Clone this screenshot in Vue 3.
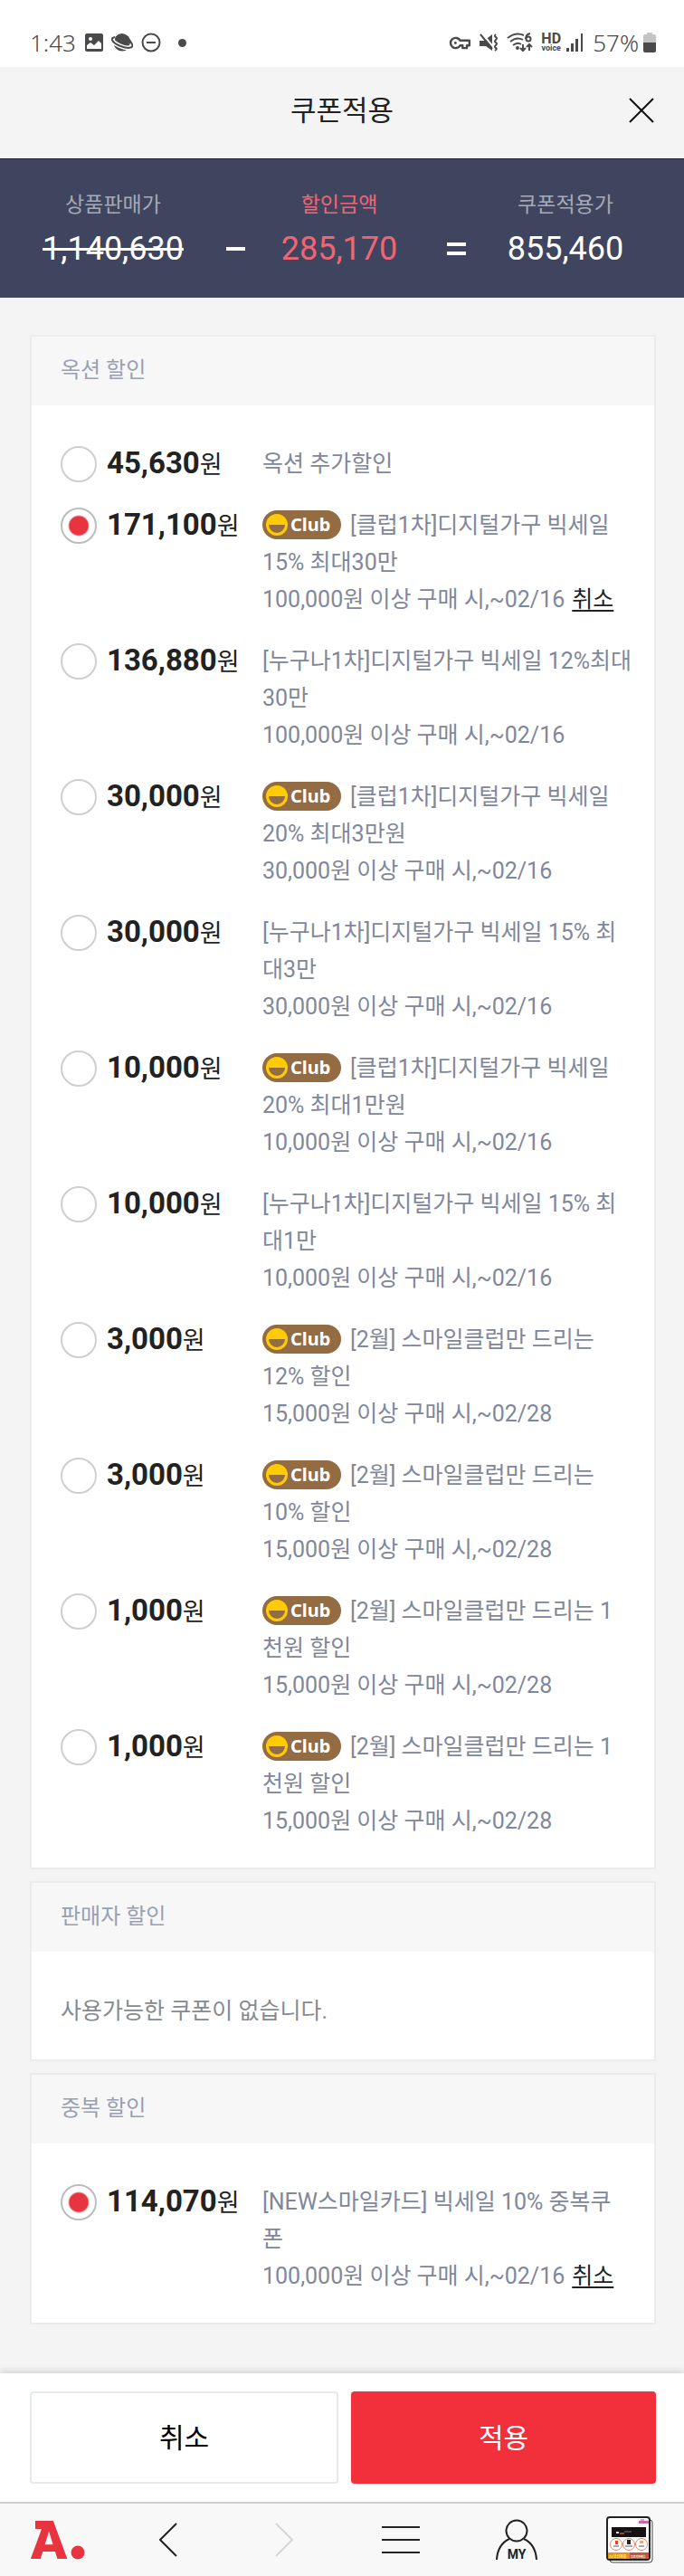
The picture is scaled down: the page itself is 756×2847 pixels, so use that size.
<script setup>
import { ref } from 'vue'

const auction = ref('1')
const overlap = ref('0')

const auctionCoupons = [
  { amount: '45,630', club: false, lines: ['옥션 추가할인'], terms: '' },
  { amount: '171,100', club: true, lines: ['[클럽1차]디지털가구 빅세일', '15% 최대30만'], terms: '100,000원 이상 구매 시,~02/16' },
  { amount: '136,880', club: false, lines: ['[누구나1차]디지털가구 빅세일 12%최대', '30만'], terms: '100,000원 이상 구매 시,~02/16' },
  { amount: '30,000', club: true, lines: ['[클럽1차]디지털가구 빅세일', '20% 최대3만원'], terms: '30,000원 이상 구매 시,~02/16' },
  { amount: '30,000', club: false, lines: ['[누구나1차]디지털가구 빅세일 15% 최', '대3만'], terms: '30,000원 이상 구매 시,~02/16' },
  { amount: '10,000', club: true, lines: ['[클럽1차]디지털가구 빅세일', '20% 최대1만원'], terms: '10,000원 이상 구매 시,~02/16' },
  { amount: '10,000', club: false, lines: ['[누구나1차]디지털가구 빅세일 15% 최', '대1만'], terms: '10,000원 이상 구매 시,~02/16' },
  { amount: '3,000', club: true, lines: ['[2월] 스마일클럽만 드리는', '12% 할인'], terms: '15,000원 이상 구매 시,~02/28' },
  { amount: '3,000', club: true, lines: ['[2월] 스마일클럽만 드리는', '10% 할인'], terms: '15,000원 이상 구매 시,~02/28' },
  { amount: '1,000', club: true, lines: ['[2월] 스마일클럽만 드리는 1', '천원 할인'], terms: '15,000원 이상 구매 시,~02/28' },
  { amount: '1,000', club: true, lines: ['[2월] 스마일클럽만 드리는 1', '천원 할인'], terms: '15,000원 이상 구매 시,~02/28' },
]
const overlapCoupons = [
  { amount: '114,070', lines: ['[NEW스마일카드] 빅세일 10% 중복쿠', '폰'], terms: '100,000원 이상 구매 시,~02/16' },
]
</script>

<template>
  <div class="page">
    <div class="status">
      <div class="status-side">
        <span class="clock">1:43</span>
        <svg class="st-image" width="20" height="20" viewBox="0 0 20 20">
          <rect width="20" height="20" rx="2" fill="#4a4a4a" />
          <circle cx="6" cy="6" r="2" fill="#fff" />
          <path d="M2 17v-4l4-3 4 3 5-5 3 3v6z" fill="#fff" />
        </svg>
        <svg class="st-planet" width="24" height="20" viewBox="0 0 24 20">
          <circle cx="12" cy="10" r="9.500" fill="#4a4a4a" />
          <path d="M4 4C-2 5 1 10 9 13.500S24 17 22.500 11" fill="none" stroke="#fff" stroke-width="5" />
          <path d="M4 4C-2 5 1 10 9 13.500S26 17 22.500 11L20 7" fill="none" stroke="#4a4a4a" stroke-width="2" />
          <path d="M4 6Q6 0 12 0q6 1 8 6 2 4-1 6Q10 12 4 6z" fill="#4a4a4a" />
        </svg>
        <svg class="st-minus" width="22" height="22" viewBox="0 0 22 22" fill="none" stroke="#4a4a4a" stroke-width="2">
          <circle cx="11" cy="11" r="9.500" />
          <path d="M6 11h10" />
        </svg>
        <i class="st-dot"></i>
      </div>
      <div class="status-side">
        <svg width="25" height="15" viewBox="0 0 26 16" fill="none" stroke="#4a4a4a" stroke-width="2.600">
          <path d="M13 5a6 6 0 1 0 0 6h3v3h5v-3h3V5z" stroke-linejoin="round" />
          <circle cx="7.500" cy="8" r="1.500" fill="#4a4a4a" stroke="none" />
        </svg>
        <svg class="st-mute" width="21" height="20" viewBox="0 0 21 20">
          <path d="M0 8h5l9-7v18l-7-5H0z" fill="#4a4a4a" />
          <path d="M3 0l14 17" stroke="#fff" stroke-width="2" />
          <path d="M1 1l13 16" stroke="#4a4a4a" stroke-width="2" />
          <path d="M18 1q-2 2 0 3t0 3 0 3 0 3 0 3-1 3" fill="none" stroke="#4a4a4a" stroke-width="2" />
        </svg>
        <svg class="st-wifi" width="29" height="22" viewBox="0 0 29 22" fill="none" stroke="#4a4a4a" stroke-width="2">
          <path d="M1 6q9-7 18-3M4 10q7-6 14-2M7 14q5-4 9-1" />
          <circle cx="12" cy="17" r="1" fill="#4a4a4a" />
          <path d="M26 1q-5 1-5 6" />
          <circle cx="24" cy="7" r="2.500" />
          <path d="M18 13v7M15 17l3 3 3-3M25 20v-7M22 16l3-3 3 3" />
        </svg>
        <span class="hd"><b>HD</b><small>voice</small></span>
        <svg class="st-signal" width="19" height="20" viewBox="0 0 19 20" fill="#4a4a4a">
          <rect y="16" width="3" height="4" />
          <rect x="5" y="11" width="3" height="9" />
          <rect x="10" y="6" width="3" height="14" />
          <rect x="16" width="2" height="20" />
        </svg>
        <span class="percent">57%</span>
        <svg class="st-battery" width="14" height="22" viewBox="0 0 14 22">
          <path d="M4 0h6v2h2q2 0 2 2v8H0V4q0-2 2-2h2z" fill="#c4c4c4" />
          <path d="M0 11h14v9q0 2-2 2H2q-2 0-2-2z" fill="#4a4a4a" />
        </svg>
      </div>
    </div>

    <header class="top">
      <h1>쿠폰적용</h1>
      <button class="close" type="button" aria-label="닫기">
        <svg width="28" height="28" viewBox="0 0 28 28" stroke="#111" stroke-width="2">
          <path d="M1 1l26 26M27 1L1 27" />
        </svg>
      </button>
    </header>

    <section class="summary">
      <div class="sum-item">
        <span class="sum-label">상품판매가</span>
        <del class="sum-value">1,140,630</del>
      </div>
      <i class="op minus"></i>
      <div class="sum-item discount">
        <span class="sum-label">할인금액</span>
        <span class="sum-value">285,170</span>
      </div>
      <i class="op equals"></i>
      <div class="sum-item">
        <span class="sum-label">쿠폰적용가</span>
        <span class="sum-value">855,460</span>
      </div>
    </section>

    <main class="panels">
      <section class="panel">
        <h2>옥션 할인</h2>
        <ul class="coupons">
          <li v-for="(c, i) in auctionCoupons" :key="i">
            <input :id="'a' + i" v-model="auction" type="radio" name="auction" :value="String(i)" />
            <label class="amount" :for="'a' + i"><b>{{ c.amount }}</b>원</label>
            <div class="desc">
              <p v-for="(line, n) in c.lines" :key="n">
                <span v-if="c.club && n === 0" class="club">
                  <svg width="24" height="24" viewBox="0 0 24 24">
                    <circle cx="12" cy="12" r="10.500" fill="#946c43" stroke="#ffcb05" stroke-width="3" />
                    <path d="M2 12a10 10 0 0 1 20 0z" fill="#ffcb05" />
                  </svg>Club</span>{{ line }}
              </p>
              <p v-if="c.terms">{{ c.terms }}<a v-if="auction === String(i)" href="#">취소</a></p>
            </div>
          </li>
        </ul>
      </section>

      <section class="panel">
        <h2>판매자 할인</h2>
        <p class="empty">사용가능한 쿠폰이 없습니다.</p>
      </section>

      <section class="panel">
        <h2>중복 할인</h2>
        <ul class="coupons">
          <li v-for="(c, i) in overlapCoupons" :key="i">
            <input :id="'o' + i" v-model="overlap" type="radio" name="overlap" :value="String(i)" />
            <label class="amount" :for="'o' + i"><b>{{ c.amount }}</b>원</label>
            <div class="desc">
              <p v-for="(line, n) in c.lines" :key="n">{{ line }}</p>
              <p>{{ c.terms }}<a v-if="overlap === String(i)" href="#">취소</a></p>
            </div>
          </li>
        </ul>
      </section>
    </main>

    <div class="actions">
      <button type="button" class="cancel">취소</button>
      <button type="button" class="apply">적용</button>
    </div>

    <nav class="nav">
      <a href="#" aria-label="홈">
        <svg class="logo" width="56" height="44" viewBox="0 0 56 44" fill="#e8343f">
          <text x="0" y="43" class="logo-letter">A</text>
          <rect x="5" y="1" width="16" height="9" />
          <circle cx="52" cy="36" r="7.500" />
        </svg>
      </a>
      <a href="#" aria-label="이전">
        <svg width="20" height="38" viewBox="0 0 20 38" fill="none" stroke="#222" stroke-width="2">
          <path d="M19 1L1 19l18 18" />
        </svg>
      </a>
      <a href="#" aria-label="다음">
        <svg width="20" height="38" viewBox="0 0 20 38" fill="none" stroke="#d6d6d6" stroke-width="2">
          <path d="M1 1l18 18L1 37" />
        </svg>
      </a>
      <a href="#" aria-label="메뉴">
        <svg width="42" height="32" viewBox="0 0 42 32" stroke="#222" stroke-width="2">
          <path d="M0 2h42M0 16h42M0 30h42" />
        </svg>
      </a>
      <a href="#" aria-label="MY">
        <svg width="46" height="46" viewBox="0 0 46 46" fill="none" stroke="#222" stroke-width="2">
          <circle cx="23" cy="13" r="11.500" />
          <path d="M1 45Q2 28 15 22M31 22q13 6 14 23" />
          <text x="23" y="44" text-anchor="middle" class="my">MY</text>
        </svg>
      </a>
      <a href="#" aria-label="최근 본 상품">
        <svg width="52" height="52" viewBox="0 0 52 52">
          <rect x="4" y="4" width="47" height="47" rx="3" fill="#fff" stroke="#444" />
          <rect x="1" y="1" width="47" height="47" rx="3" fill="#fff" stroke="#222" stroke-width="2" />
          <rect x="36" y="5" width="11" height="3" fill="#c66aa8" />
          <rect x="38" y="3" width="4" height="2" fill="#d9a0c8" />
          <rect x="6" y="12" width="38" height="11" fill="#161212" />
          <path d="M11 18h3" stroke="#ddd" stroke-width="2" />
          <path d="M15 19h5" stroke="#b33a2c" stroke-width="2" />
          <path d="M20 17h8" stroke="#777" />
          <g fill="#fff" stroke="#e8825f">
            <circle cx="11" cy="31" r="6.500" />
            <circle cx="25" cy="31" r="6.500" />
            <circle cx="39" cy="31" r="6.500" />
          </g>
          <path d="M10 27h3v4h-3z" fill="#e0452c" />
          <path d="M23 26h4v5h-4z" fill="#222" />
          <path d="M37 27h4v3h-4z" fill="#efa582" />
          <path d="M8 33h6M21 33h8M36 33h6" stroke="#555" />
          <path d="M2 40h24v7H4q-2 0-2-2z" fill="#f08a1d" />
          <path d="M26 40h21v5q0 2-2 2H26z" fill="#c5563a" />
          <text x="3" y="46" class="tiny yellow">21년신제품</text>
          <text x="27" y="46" class="tiny small">무료각인배송</text>
        </svg>
      </a>
    </nav>
  </div>
</template>

<style>
body {
  margin: 0;
  background: #f4f4f4;
}
</style>

<style scoped>
.page {
  font-family: Roboto, "Noto Sans CJK KR", sans-serif;
  font-size: 25px;
  color: #222;
  background: #f4f4f4;
}
h1, h2, p, ul {
  margin: 0;
  padding: 0;
  font-weight: 400;
}
svg {
  display: block;
}
button {
  font: inherit;
  padding: 0;
}
.status {
  display: flex;
  justify-content: space-between;
  box-sizing: border-box;
  height: 74px;
  padding: 20px 31px 0 33px;
  background: #fff;
  color: #4a4a4a;
}
.status-side {
  display: flex;
  align-items: center;
}
.clock, .percent {
  font-family: "Noto Sans", sans-serif;
  font-size: 26px;
  font-weight: 300;
}
.clock {
  width: 61px;
}
.st-planet, .st-minus {
  margin-left: 9px;
}
.st-dot {
  width: 9px;
  height: 9px;
  margin-left: 19px;
  border-radius: 50%;
  background: #4a4a4a;
}
.st-mute, .st-wifi {
  margin-left: 9px;
}
.hd {
  display: flex;
  flex-direction: column;
  align-items: center;
  width: 24px;
  margin: 0 5px 0 8px;
}
.hd b {
  font-size: 16px;
  line-height: 12px;
}
.hd small {
  font-size: 9px;
  line-height: 8px;
  font-weight: 700;
}
.percent {
  margin: 0 5px 0 10px;
}
.top {
  position: relative;
  display: flex;
  align-items: center;
  justify-content: center;
  box-sizing: border-box;
  height: 102px;
  padding-bottom: 4px;
  border-bottom: 1px solid #20263a;
}
h1 {
  font-size: 31px;
  line-height: 44px;
}
.close {
  position: absolute;
  right: 33px;
  top: 34px;
  border: 0;
  background: none;
}
.summary {
  display: grid;
  grid-template-columns: 250fr 21fr 208fr 50fr 192fr;
  box-sizing: border-box;
  height: 153px;
  padding: 35px 35px 0 0;
  background: #3f455f;
}
.sum-item {
  display: flex;
  flex-direction: column;
  align-items: center;
  color: #fff;
}
.sum-label {
  font-size: 23px;
  line-height: 32px;
  color: #a6a9b7;
}
.sum-value {
  font-size: 36px;
  line-height: 48px;
  margin-top: 8px;
}
.sum-item.discount, .discount .sum-label {
  color: #f06573;
}
.op {
  box-sizing: border-box;
  justify-self: center;
  width: 21px;
  border-top: 4px solid #fff;
}
.minus {
  margin-top: 62px;
  height: 4px;
}
.equals {
  margin-top: 57px;
  height: 14px;
  border-bottom: 4px solid #fff;
}
.panels {
  display: flex;
  flex-direction: column;
  gap: 13px;
  padding: 41px 31px 54px 33px;
}
.panel {
  border: 2px solid #ebebeb;
  background: #fff;
}
h2 {
  padding: 17px 32px 19px;
  font-size: 24px;
  line-height: 40px;
  color: #98a0b3;
  background: #f7f7f7;
}
.coupons {
  list-style: none;
  display: flex;
  flex-direction: column;
  gap: 27px;
  padding: 44px 0 31px 32px;
}
.coupons li {
  display: flex;
  align-items: flex-start;
  line-height: 41px;
}
input {
  appearance: none;
  box-sizing: border-box;
  flex: none;
  width: 40px;
  height: 40px;
  margin: 1px 11px 0 0;
  border: 2px solid #cfcfcf;
  border-radius: 50%;
  background: #fff;
}
input:checked {
  border-color: #bdbdbd;
  background: radial-gradient(circle, #e8343f 10px, #fff 12px);
}
.amount {
  box-sizing: border-box;
  flex: none;
  width: 172px;
  height: 41px;
  padding-top: 2px;
  font-size: 27px;
}
.amount b {
  font-size: 33px;
  font-weight: 700;
  line-height: 33px;
}
.desc {
  flex: 1;
  color: #81879b;
}
.desc a {
  margin-left: 8px;
  color: #222;
  text-underline-offset: 3px;
}
.club {
  display: inline-flex;
  align-items: center;
  vertical-align: top;
  gap: 3px;
  box-sizing: border-box;
  width: 87px;
  height: 32px;
  margin: 4px 10px 0 0;
  padding-left: 4px;
  border-radius: 16px;
  background: #946c43;
  color: #fff;
  font-family: "Noto Sans", sans-serif;
  font-size: 20px;
  font-weight: 700;
  line-height: 32px;
}
.empty {
  padding: 45px 32px 33px;
  line-height: 41px;
  color: #878a90;
}
.actions {
  position: relative;
  display: flex;
  gap: 14px;
  padding: 20px 31px 20px 33px;
  background: #fff;
  box-shadow: 0 -2px 8px rgba(0, 0, 0, 0.15);
}
.actions button {
  flex: 1;
  box-sizing: border-box;
  height: 102px;
  padding-bottom: 4px;
  border-radius: 4px;
  font-size: 30px;
}
.cancel {
  border: 2px solid #e6e9ee;
  background: #fff;
  color: #000;
}
.apply {
  border: 0;
  background: #f1303b;
  color: #fff;
}
.nav {
  position: relative;
  display: grid;
  grid-template-columns: 124fr 124fr 132fr 126fr 130fr 120fr;
  align-items: center;
  justify-items: center;
  box-sizing: border-box;
  height: 82px;
  border-top: 2px solid #cfcfcf;
  background: #f8f8f8;
}
.logo {
  overflow: visible;
}
.logo-letter {
  font: 900 59px Roboto, sans-serif;
}
.my {
  font: 700 14px Roboto, sans-serif;
  fill: #222;
  stroke: none;
}
.tiny {
  font: 700 4px "Noto Sans CJK KR", sans-serif;
  fill: #fff;
}
.tiny.yellow {
  fill: #ffee66;
}
.tiny.small {
  font-size: 3px;
}
</style>
